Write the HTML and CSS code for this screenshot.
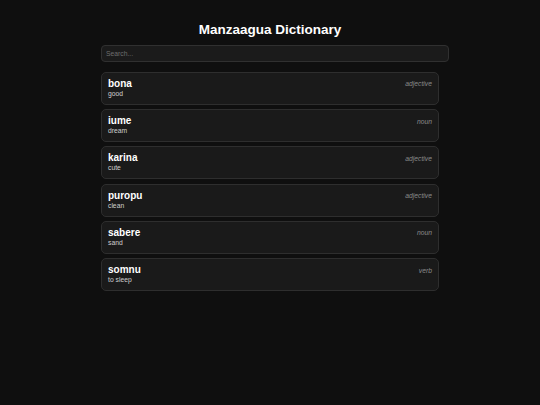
FILE: index.html
```html
<!DOCTYPE html>
<html lang="en">
<head>
    <meta charset="UTF-8">
    <meta name="viewport" content="width=device-width, initial-scale=1.0">
    <title>Manzaagua Dictionary</title>
    <link rel="stylesheet" href="styles.css">
</head>
<body>
    <div class="container">
        <h1>Manzaagua Dictionary</h1>
        <input type="text" class="search" id="search" placeholder="Search...">

        <div class="word-list" id="wordList">
            <div class="word-card">
                <div class="word-top">
                    <span class="word">bona</span>
                    <span class="pos">adjective</span>
                </div>
                <div class="meaning">good</div>
            </div>
            <div class="word-card">
                <div class="word-top">
                    <span class="word">iume</span>
                    <span class="pos">noun</span>
                </div>
                <div class="meaning">dream</div>
            </div>
            <div class="word-card">
                <div class="word-top">
                    <span class="word">karina</span>
                    <span class="pos">adjective</span>
                </div>
                <div class="meaning">cute</div>
            </div>
            <div class="word-card">
                <div class="word-top">
                    <span class="word">puropu</span>
                    <span class="pos">adjective</span>
                </div>
                <div class="meaning">clean</div>
            </div>
            <div class="word-card">
                <div class="word-top">
                    <span class="word">sabere</span>
                    <span class="pos">noun</span>
                </div>
                <div class="meaning">sand</div>
            </div>
            <div class="word-card">
                <div class="word-top">
                    <span class="word">somnu</span>
                    <span class="pos">verb</span>
                </div>
                <div class="meaning">to sleep</div>
            </div>
        </div>
    </div>
</body>
</html>
```

FILE: styles.css
```css
body {
    font-family: "Liberation Sans", Arial, sans-serif;
    color: white;
    margin: 0;
    padding: 0;
    background-color: #0f0f0f;
}

.container {
    max-width: 338px;
    margin: 0 auto;
    padding-top: 22px;
}

h1 {
    font-size: 13.5px;
    line-height: 16px;
    text-align: center;
    margin: 0 0 6.7px 0;
}

.search {
    display: block;
    width: 100%; /* padding makes it stick out a bit, like the original */
    height: 15px;
    padding: 0 4px;
    margin: 0 0 10.3px 0;
    background: #1b1b1b;
    border: 1px solid #303030;
    border-radius: 4px;
    color: white;
    font-family: inherit;
    font-size: 6.75px;
    outline: none;
}

.search::placeholder {
    color: #6e6e6e;
}

.word-list {
    display: flex;
    flex-direction: column;
    gap: 4.26px;
}

.word-card {
    background: #1a1a1a;
    border: 1px solid #2e2e2e;
    border-radius: 5px;
    padding: 5px 6px 6px 6px;
}

.word-top {
    display: flex;
    justify-content: space-between;
    align-items: center;
}

.word {
    font-size: 10px;
    line-height: 12px;
    font-weight: bold;
}

.pos {
    font-size: 6.75px;
    font-style: italic;
    color: #8a8a8a;
}

.meaning {
    font-size: 6.75px;
    line-height: 8px;
    color: #cfcfcf;
}
```
